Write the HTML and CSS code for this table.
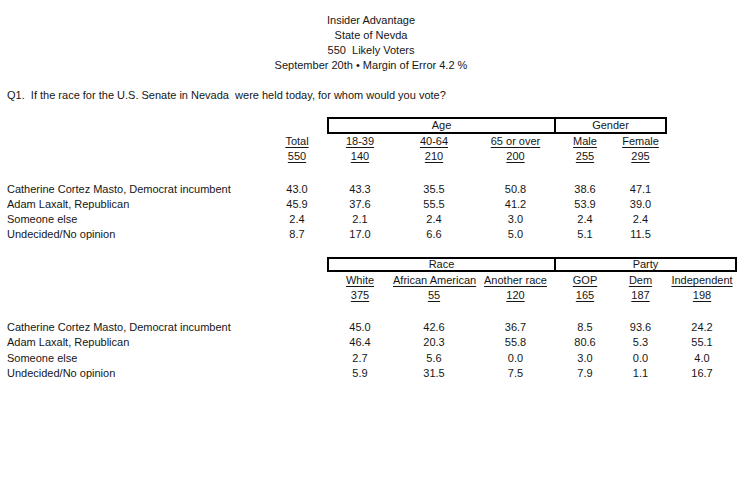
FILE: index.html
```html
<!DOCTYPE html>
<html lang="en">
<head>
<meta charset="utf-8">
<title>Insider Advantage – State of Nevda</title>
<link rel="stylesheet" href="styles.css">
</head>
<body>
<header class="title">
  <div>Insider Advantage</div>
  <div>State of Nevda</div>
  <div class="pre">550  Likely Voters</div>
  <div>September 20th • Margin of Error 4.2 %</div>
</header>
<main class="content">
  <p class="question">Q1.  If the race for the U.S. Senate in Nevada  were held today, for whom would you vote?</p>

  <section class="xtab xtab-one">
    <div class="groups">
      <div class="group group-a">Age</div>
      <div class="group group-b">Gender</div>
    </div>
    <div class="row head-row labels">
      <div></div><div>Total</div><div>18-39</div><div>40-64</div><div>65 or over</div><div>Male</div><div>Female</div><div></div>
    </div>
    <div class="row head-row counts">
      <div></div><div>550</div><div>140</div><div>210</div><div>200</div><div>255</div><div>295</div><div></div>
    </div>
    <div class="body">
      <div class="row"><div class="label">Catherine Cortez Masto, Democrat incumbent</div><div>43.0</div><div>43.3</div><div>35.5</div><div>50.8</div><div>38.6</div><div>47.1</div><div></div></div>
      <div class="row"><div class="label">Adam Laxalt, Republican</div><div>45.9</div><div>37.6</div><div>55.5</div><div>41.2</div><div>53.9</div><div>39.0</div><div></div></div>
      <div class="row"><div class="label">Someone else</div><div>2.4</div><div>2.1</div><div>2.4</div><div>3.0</div><div>2.4</div><div>2.4</div><div></div></div>
      <div class="row"><div class="label">Undecided/No opinion</div><div>8.7</div><div>17.0</div><div>6.6</div><div>5.0</div><div>5.1</div><div>11.5</div><div></div></div>
    </div>
  </section>

  <section class="xtab xtab-two">
    <div class="groups">
      <div class="group group-a">Race</div>
      <div class="group group-c">Party</div>
    </div>
    <div class="row head-row labels">
      <div></div><div></div><div>White</div><div>African American</div><div>Another race</div><div>GOP</div><div>Dem</div><div>Independent</div>
    </div>
    <div class="row head-row counts">
      <div></div><div></div><div>375</div><div>55</div><div>120</div><div>165</div><div>187</div><div>198</div>
    </div>
    <div class="body">
      <div class="row"><div class="label">Catherine Cortez Masto, Democrat incumbent</div><div></div><div>45.0</div><div>42.6</div><div>36.7</div><div>8.5</div><div>93.6</div><div>24.2</div></div>
      <div class="row"><div class="label">Adam Laxalt, Republican</div><div></div><div>46.4</div><div>20.3</div><div>55.8</div><div>80.6</div><div>5.3</div><div>55.1</div></div>
      <div class="row"><div class="label">Someone else</div><div></div><div>2.7</div><div>5.6</div><div>0.0</div><div>3.0</div><div>0.0</div><div>4.0</div></div>
      <div class="row"><div class="label">Undecided/No opinion</div><div></div><div>5.9</div><div>31.5</div><div>7.5</div><div>7.9</div><div>1.1</div><div>16.7</div></div>
    </div>
  </section>
</main>
</body>
</html>
```

FILE: styles.css
```css
html, body {
  margin: 0;
  padding: 0;
  background: #ffffff;
}

body {
  font-family: "Liberation Sans", Arial, sans-serif;
  font-size: 11px;
  color: #161616;
  width: 750px;
}

.title {
  width: 742px;
  padding-top: 13px;
  text-align: center;
  line-height: 15px;
}

.pre,
.question {
  white-space: pre;
}

.content {
  padding-left: 7px;
}

.question {
  margin: 15px 0 0 0;
  line-height: 15px;
}

.groups,
.row {
  display: grid;
  grid-template-columns: 260px 60px 66px 82px 81px 58px 53px 70px;
}

.group {
  border: 2px solid #000;
  text-align: center;
  box-sizing: border-box;
}

.group-a {
  grid-column: 3 / 6;
}

.group-b {
  grid-column: 6 / 8;
  border-left: none;
}

.group-c {
  grid-column: 6 / 9;
  border-left: none;
}

.row > div {
  text-align: center;
  white-space: nowrap;
}

.row > .label {
  text-align: left;
}

.head-row > div {
  text-decoration: underline;
  text-underline-offset: 2px;
}

.body .row {
  line-height: 15.33px;
}

/* first cross-tab */
.xtab-one {
  margin-top: 14px;
}

.xtab-one .group {
  height: 17px;
  line-height: 13px;
}

.xtab-one .head-row {
  line-height: 15px;
}

.xtab-one .body {
  margin-top: 17.5px;
}

/* second cross-tab */
.xtab-two {
  margin-top: 14px;
}

.xtab-two .group {
  height: 15px;
  line-height: 11px;
}

.xtab-two .labels {
  line-height: 16px;
}

.xtab-two .counts {
  line-height: 15px;
}

.xtab-two .body {
  margin-top: 17.3px;
}
```
